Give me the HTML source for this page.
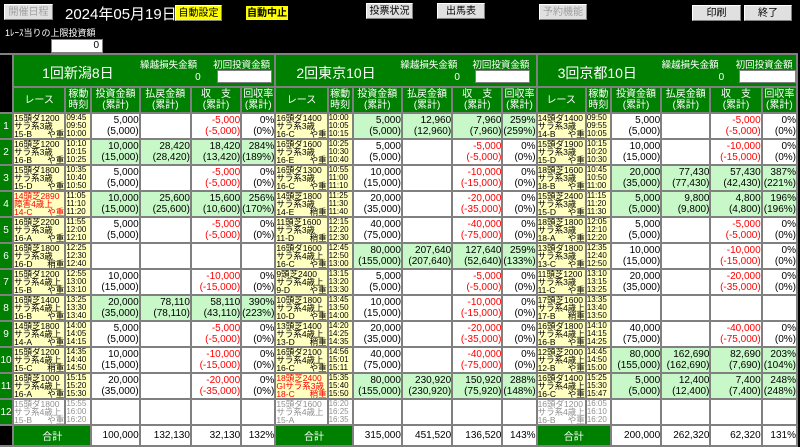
<!DOCTYPE html>
<html><head><meta charset="utf-8"><style>
*{margin:0;padding:0;box-sizing:border-box}
body{width:800px;height:445px;background:#000;overflow:hidden;position:relative;font-family:"Liberation Sans","Noto Sans CJK JP",sans-serif;color:#fff}
.b{position:absolute;background:#e0e0e0;color:#000;font-size:10px;text-align:center;line-height:15px;height:16px;border:1px solid #fff;border-right-color:#808080;border-bottom-color:#808080}
.b.d{color:#a0a0a0}
.b.y{background:#ffff00;color:#000}
.lab{position:absolute;font-size:9px}
.inp{position:absolute;background:#fff;color:#000;font-size:10px;text-align:right;padding-right:3px;border:1px solid #808080;line-height:12px}
table{position:absolute;left:-2px;top:53px;border-collapse:separate;border-spacing:2px;background:#808080;table-layout:fixed;width:800px}
td{padding:0;background:#fff;color:#000;vertical-align:middle;overflow:hidden;white-space:nowrap}
tr.d td{height:23.8px;font-size:10px;line-height:11px;text-align:right}
td.g{background:#c8f8c8}
td.n{color:#f00}
td.r,td.t{background:#ffffc0;text-align:left !important;font-size:8.5px !important;line-height:8px !important}
td.t{font-size:8px !important}
td.r i{font-style:normal;float:right}
td.r.red{color:#f00}
td.r.gr,td.t.gr{background:#fff;color:#909090}
td.no{background:#008000;color:#fff;text-align:center !important;font-size:10px}
.hd td{background:#008000;color:#fff;text-align:center;font-size:10px;line-height:11px;height:24px}
.tt td.ti{background:#008000;height:31px;position:relative}
.ti span{position:absolute;color:#fff}
.tot td{height:19px;font-size:10px;text-align:right}
.tot td.gl{background:#008000;color:#fff;text-align:center}
td.bk{background:#000}
</style></head><body>
<div class="b d" style="left:4px;top:4px;width:49px">開催日程</div>
<div class="lab" style="left:65px;top:3px;font-size:15px">2024年05月19日</div>
<div class="b y" style="left:175px;top:5px;width:47px">自動設定</div>
<div class="b y" style="left:245px;top:5px;width:44px;border:1px solid #000;font-weight:bold">自動中止</div>
<div class="b" style="left:366px;top:3px;width:47px">投票状況</div>
<div class="b" style="left:437px;top:3px;width:48px">出馬表</div>
<div class="b d" style="left:539px;top:4px;width:48px">予約機能</div>
<div class="b" style="left:692px;top:5px;width:49px">印刷</div>
<div class="b" style="left:744px;top:5px;width:48px">終了</div>
<div class="lab" style="left:5px;top:26px">1ﾚｰｽ当りの上限投資額</div>
<div class="inp" style="left:51px;top:39px;width:52px;height:14px">0</div>
<table>
<colgroup><col style="width:12px"><col style="width:50px"><col style="width:24px"><col style="width:46px"><col style="width:49px"><col style="width:48px"><col style="width:32px"><col style="width:50px"><col style="width:23px"><col style="width:47px"><col style="width:48px"><col style="width:48px"><col style="width:32px"><col style="width:47px"><col style="width:23px"><col style="width:48px"><col style="width:47px"><col style="width:49px"><col style="width:33px"></colgroup>
<tr class="tt"><td class="bk" rowspan="2"></td>
<td class="ti" colspan="6"><span style="left:28px;top:8px;font-size:14px">1回新潟8日</span><span style="left:126px;top:2px;font-size:9.5px">繰越損失金額</span><span style="left:181px;top:17px;font-size:10px">0</span><span style="left:199px;top:2px;font-size:9.5px">初回投資金額</span><span class="inp" style="left:203px;top:15px;width:55px;height:13px;position:absolute">5,000</span></td>
<td class="ti" colspan="6"><span style="left:20px;top:8px;font-size:14px">2回東京10日</span><span style="left:124px;top:2px;font-size:9.5px">繰越損失金額</span><span style="left:178px;top:17px;font-size:10px">0</span><span style="left:196px;top:2px;font-size:9.5px">初回投資金額</span><span class="inp" style="left:199px;top:15px;width:55px;height:13px;position:absolute">5,000</span></td>
<td class="ti" colspan="6"><span style="left:20px;top:8px;font-size:14px">3回京都10日</span><span style="left:124px;top:2px;font-size:9.5px">繰越損失金額</span><span style="left:181px;top:17px;font-size:10px">0</span><span style="left:198px;top:2px;font-size:9.5px">初回投資金額</span><span class="inp" style="left:201px;top:15px;width:57px;height:13px;position:absolute">5,000</span></td></tr>
<tr class="hd"><td>レース</td><td>稼動<br>時刻</td><td>投資金額<br>(累計)</td><td>払戻金額<br>(累計)</td><td>収　支<br>(累計)</td><td>回収率<br>(累計)</td><td>レース</td><td>稼動<br>時刻</td><td>投資金額<br>(累計)</td><td>払戻金額<br>(累計)</td><td>収　支<br>(累計)</td><td>回収率<br>(累計)</td><td>レース</td><td>稼動<br>時刻</td><td>投資金額<br>(累計)</td><td>払戻金額<br>(累計)</td><td>収　支<br>(累計)</td><td>回収率<br>(累計)</td></tr>
<tr class="d"><td class="no">1</td><td class="r">15頭ダ1200<br>サラ系3歳<br>15-B<i>や重</i></td><td class="t">09:45<br>09:50<br>10:00</td><td>5,000<br>(5,000)</td><td></td><td class="n">-5,000<br>(-5,000)</td><td>0%<br>(0%)</td>
<td class="r">16頭ダ1400<br>サラ系3歳<br>16-C<i>や重</i></td><td class="t">10:00<br>10:05<br>10:15</td><td class="g">5,000<br>(5,000)</td><td class="g">12,960<br>(12,960)</td><td class="g">7,960<br>(7,960)</td><td class="g">259%<br>(259%)</td>
<td class="r">14頭ダ1400<br>サラ系3歳<br>14-B<i>や重</i></td><td class="t">09:50<br>09:55<br>10:05</td><td>5,000<br>(5,000)</td><td></td><td class="n">-5,000<br>(-5,000)</td><td>0%<br>(0%)</td></tr>
<tr class="d"><td class="no">2</td><td class="r">16頭芝1200<br>サラ系3歳<br>16-B<i>や重</i></td><td class="t">10:10<br>10:15<br>10:25</td><td class="g">10,000<br>(15,000)</td><td class="g">28,420<br>(28,420)</td><td class="g">18,420<br>(13,420)</td><td class="g">284%<br>(189%)</td>
<td class="r">16頭ダ1600<br>サラ系3歳<br>16-E<i>や重</i></td><td class="t">10:25<br>10:30<br>10:40</td><td>5,000<br>(5,000)</td><td></td><td class="n">-5,000<br>(-5,000)</td><td>0%<br>(0%)</td>
<td class="r">15頭ダ1900<br>サラ系3歳<br>15-D<i>や重</i></td><td class="t">10:15<br>10:20<br>10:30</td><td>10,000<br>(15,000)</td><td></td><td class="n">-10,000<br>(-15,000)</td><td>0%<br>(0%)</td></tr>
<tr class="d"><td class="no">3</td><td class="r">15頭ダ1800<br>サラ系3歳<br>15-D<i>や重</i></td><td class="t">10:35<br>10:40<br>10:50</td><td>5,000<br>(5,000)</td><td></td><td class="n">-5,000<br>(-5,000)</td><td>0%<br>(0%)</td>
<td class="r">16頭ダ1300<br>サラ系3歳<br>16-C<i>や重</i></td><td class="t">10:55<br>11:00<br>11:10</td><td>10,000<br>(15,000)</td><td></td><td class="n">-10,000<br>(-15,000)</td><td>0%<br>(0%)</td>
<td class="r">18頭芝1600<br>サラ系3歳<br>18-B<i>や重</i></td><td class="t">10:45<br>10:50<br>11:00</td><td class="g">20,000<br>(35,000)</td><td class="g">77,430<br>(77,430)</td><td class="g">57,430<br>(42,430)</td><td class="g">387%<br>(221%)</td></tr>
<tr class="d"><td class="no">4</td><td class="r red">14頭芝2890<br>障害4歳上<br>14-C<i>や重</i></td><td class="t">11:05<br>11:10<br>11:20</td><td class="g">10,000<br>(15,000)</td><td class="g">25,600<br>(25,600)</td><td class="g">15,600<br>(10,600)</td><td class="g">256%<br>(170%)</td>
<td class="r">14頭芝1800<br>サラ系3歳<br>14-E<i>稍重</i></td><td class="t">11:25<br>11:30<br>11:40</td><td>20,000<br>(35,000)</td><td></td><td class="n">-20,000<br>(-35,000)</td><td>0%<br>(0%)</td>
<td class="r">15頭芝2400<br>サラ系3歳<br>15-D<i>や重</i></td><td class="t">11:15<br>11:20<br>11:30</td><td class="g">5,000<br>(5,000)</td><td class="g">9,800<br>(9,800)</td><td class="g">4,800<br>(4,800)</td><td class="g">196%<br>(196%)</td></tr>
<tr class="d"><td class="no">5</td><td class="r">16頭芝2200<br>サラ系3歳<br>16-A<i>や重</i></td><td class="t">11:55<br>12:00<br>12:10</td><td>5,000<br>(5,000)</td><td></td><td class="n">-5,000<br>(-5,000)</td><td>0%<br>(0%)</td>
<td class="r">11頭芝1600<br>サラ系3歳<br>11-D<i>稍重</i></td><td class="t">12:15<br>12:20<br>12:30</td><td>40,000<br>(75,000)</td><td></td><td class="n">-40,000<br>(-75,000)</td><td>0%<br>(0%)</td>
<td class="r">18頭芝1800<br>サラ系3歳<br>18-A<i>や重</i></td><td class="t">12:05<br>12:10<br>12:20</td><td>5,000<br>(5,000)</td><td></td><td class="n">-5,000<br>(-5,000)</td><td>0%<br>(0%)</td></tr>
<tr class="d"><td class="no">6</td><td class="r">16頭芝1800<br>サラ系3歳<br>16-D<i>稍重</i></td><td class="t">12:25<br>12:30<br>12:40</td><td></td><td></td><td></td><td></td>
<td class="r">16頭ダ1600<br>サラ系4歳上<br>16-C<i>や重</i></td><td class="t">12:45<br>12:50<br>13:00</td><td class="g">80,000<br>(155,000)</td><td class="g">207,640<br>(207,640)</td><td class="g">127,640<br>(52,640)</td><td class="g">259%<br>(133%)</td>
<td class="r">13頭ダ1800<br>サラ系3歳<br>13-C<i>や重</i></td><td class="t">12:35<br>12:40<br>12:50</td><td>10,000<br>(15,000)</td><td></td><td class="n">-10,000<br>(-15,000)</td><td>0%<br>(0%)</td></tr>
<tr class="d"><td class="no">7</td><td class="r">15頭ダ1200<br>サラ系4歳上<br>15-B<i>や重</i></td><td class="t">12:55<br>13:00<br>13:10</td><td>10,000<br>(15,000)</td><td></td><td class="n">-10,000<br>(-15,000)</td><td>0%<br>(0%)</td>
<td class="r">9頭芝2400<br>サラ系4歳上<br>9-D<i>や重</i></td><td class="t">13:15<br>13:20<br>13:30</td><td>5,000<br>(5,000)</td><td></td><td class="n">-5,000<br>(-5,000)</td><td>0%<br>(0%)</td>
<td class="r">11頭芝1200<br>サラ系3歳<br>11-C<i>や重</i></td><td class="t">13:10<br>13:15<br>13:25</td><td>20,000<br>(35,000)</td><td></td><td class="n">-20,000<br>(-35,000)</td><td>0%<br>(0%)</td></tr>
<tr class="d"><td class="no">8</td><td class="r">16頭芝1400<br>サラ系4歳上<br>16-B<i>や重</i></td><td class="t">13:25<br>13:30<br>13:40</td><td class="g">20,000<br>(35,000)</td><td class="g">78,110<br>(78,110)</td><td class="g">58,110<br>(43,110)</td><td class="g">390%<br>(223%)</td>
<td class="r">10頭芝1800<br>サラ系4歳上<br>10-D<i>や重</i></td><td class="t">13:45<br>13:50<br>14:00</td><td>10,000<br>(15,000)</td><td></td><td class="n">-10,000<br>(-15,000)</td><td>0%<br>(0%)</td>
<td class="r">17頭芝1600<br>サラ系4歳上<br>17-B<i>稍重</i></td><td class="t">13:35<br>13:40<br>13:50</td><td></td><td></td><td></td><td></td></tr>
<tr class="d"><td class="no">9</td><td class="r">14頭芝1800<br>サラ系4歳上<br>14-A<i>や重</i></td><td class="t">14:00<br>14:05<br>14:15</td><td>5,000<br>(5,000)</td><td></td><td class="n">-5,000<br>(-5,000)</td><td>0%<br>(0%)</td>
<td class="r">13頭芝1400<br>サラ系4歳上<br>13-D<i>稍重</i></td><td class="t">14:20<br>14:25<br>14:35</td><td>20,000<br>(35,000)</td><td></td><td class="n">-20,000<br>(-35,000)</td><td>0%<br>(0%)</td>
<td class="r">16頭ダ1800<br>サラ系4歳上<br>16-B<i>や重</i></td><td class="t">14:10<br>14:15<br>14:25</td><td>40,000<br>(75,000)</td><td></td><td class="n">-40,000<br>(-75,000)</td><td>0%<br>(0%)</td></tr>
<tr class="d"><td class="no">10</td><td class="r">15頭ダ1200<br>サラ系4歳上<br>15-C<i>稍重</i></td><td class="t">14:35<br>14:40<br>14:50</td><td>10,000<br>(15,000)</td><td></td><td class="n">-10,000<br>(-15,000)</td><td>0%<br>(0%)</td>
<td class="r">16頭ダ2100<br>サラ系4歳上<br>16-C<i>や重</i></td><td class="t">14:56<br>15:01<br>15:11</td><td>40,000<br>(75,000)</td><td></td><td class="n">-40,000<br>(-75,000)</td><td>0%<br>(0%)</td>
<td class="r">12頭芝2000<br>サラ系4歳上<br>12-B<i>や重</i></td><td class="t">14:45<br>14:50<br>15:00</td><td class="g">80,000<br>(155,000)</td><td class="g">162,690<br>(162,690)</td><td class="g">82,690<br>(7,690)</td><td class="g">203%<br>(104%)</td></tr>
<tr class="d"><td class="no">11</td><td class="r">16頭芝1000<br>サラ系4歳上<br>16-A<i>や重</i></td><td class="t">15:15<br>15:20<br>15:30</td><td>20,000<br>(35,000)</td><td></td><td class="n">-20,000<br>(-35,000)</td><td>0%<br>(0%)</td>
<td class="r red">18頭芝2400<br>GIサラ系3歳<br>18-C<i>稍重</i></td><td class="t">15:35<br>15:40<br>15:50</td><td class="g">80,000<br>(155,000)</td><td class="g">230,920<br>(230,920)</td><td class="g">150,920<br>(75,920)</td><td class="g">288%<br>(148%)</td>
<td class="r">16頭ダ1400<br>サラ系4歳上<br>16-C<i>や重</i></td><td class="t">15:25<br>15:30<br>15:47</td><td class="g">5,000<br>(5,000)</td><td class="g">12,400<br>(12,400)</td><td class="g">7,400<br>(7,400)</td><td class="g">248%<br>(248%)</td></tr>
<tr class="d"><td class="no">12</td><td class="r gr">15頭ダ1800<br>サラ系4歳上<br>15-B<i>や重</i></td><td class="t gr">15:55<br>16:00<br>16:20</td><td></td><td></td><td></td><td></td>
<td class="r gr">15頭ダ1600<br>サラ系4歳上<br>15-A</td><td class="t gr">16:20<br>16:25<br>16:35</td><td></td><td></td><td></td><td></td>
<td class="r gr">16頭ダ1200<br>サラ系4歳上<br>16-B<i>や重</i></td><td class="t gr">16:05<br>16:10<br>16:20</td><td></td><td></td><td></td><td></td></tr>
<tr class="tot"><td class="bk"></td><td class="gl" colspan="2">合計</td><td>100,000</td><td>132,130</td><td>32,130</td><td>132%</td><td class="gl" colspan="2">合計</td><td>315,000</td><td>451,520</td><td>136,520</td><td>143%</td><td class="gl" colspan="2">合計</td><td>200,000</td><td>262,320</td><td>62,320</td><td>131%</td></tr>
</table>
</body></html>
